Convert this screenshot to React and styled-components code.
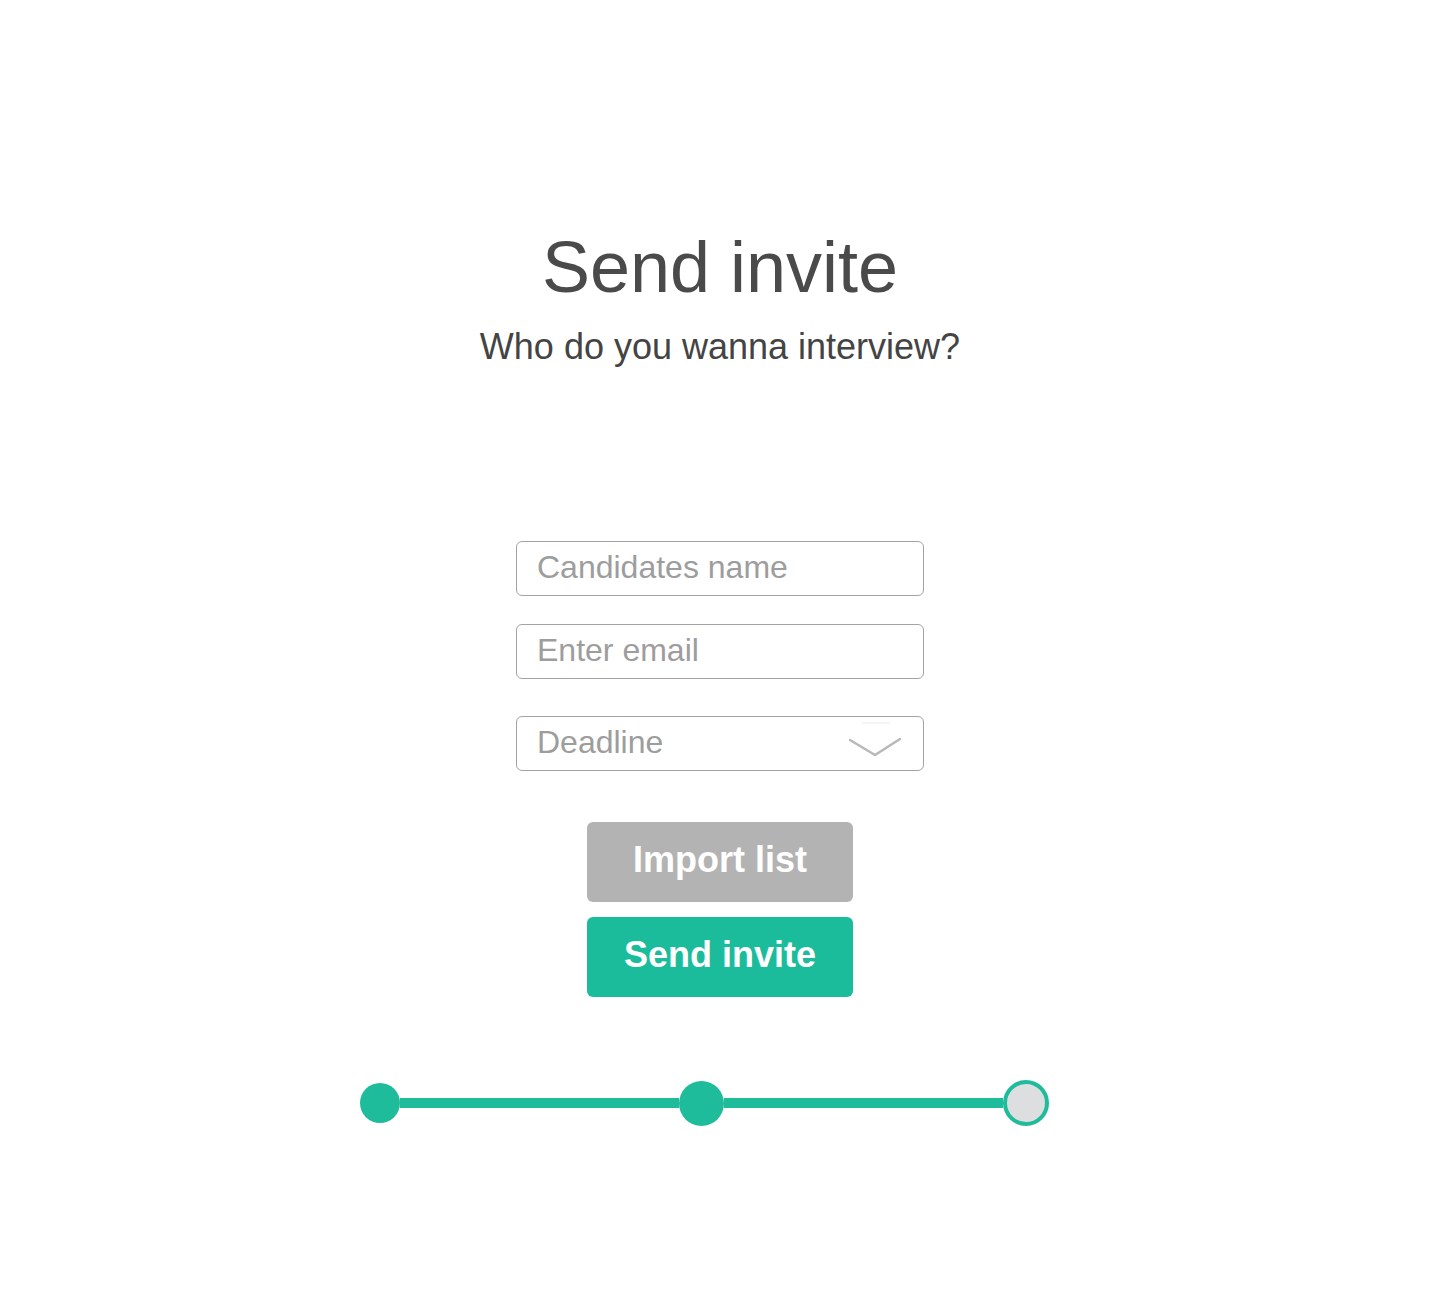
import React from "react";
import styled, { createGlobalStyle } from "styled-components";

const GlobalStyle = createGlobalStyle`
  body {
    margin: 0;
    background: #ffffff;
    font-family: "Liberation Sans", Arial, Helvetica, sans-serif;
  }
`;

const Page = styled.main`
  min-height: 1315px;
  padding-top: 231px;
  box-sizing: border-box;
  display: flex;
  flex-direction: column;
  align-items: center;
`;

const Title = styled.h1`
  margin: 0;
  font-size: 72px;
  line-height: 72px;
  font-weight: 400;
  color: #4a4a4a;
`;

const Subtitle = styled.p`
  margin: 26px 0 0;
  font-size: 36px;
  line-height: 36px;
  color: #444444;
`;

const Form = styled.form`
  margin-top: 176px;
  width: 408px;
  display: flex;
  flex-direction: column;
  align-items: center;
`;

const Input = styled.input`
  display: block;
  width: 100%;
  height: 55px;
  box-sizing: border-box;
  margin-top: ${(props) => props.gap || 0}px;
  padding: 0 20px 3px;
  border: 1px solid #a3a3a3;
  border-radius: 6px;
  outline: none;
  font-family: inherit;
  font-size: 32px;
  color: #4a4a4a;

  &::placeholder {
    color: #9d9d9d;
    opacity: 1;
  }
`;

const Select = styled.div`
  width: 100%;
  height: 55px;
  box-sizing: border-box;
  margin-top: 37px;
  padding: 0 22px 3px 20px;
  border: 1px solid #a3a3a3;
  border-radius: 6px;
  display: flex;
  align-items: center;
  justify-content: space-between;
  font-size: 32px;
  color: #9d9d9d;
  cursor: pointer;

  svg {
    margin-bottom: 4px;
  }
`;

const Button = styled.button`
  display: block;
  width: 266px;
  height: 80px;
  margin-top: ${(props) => props.gap}px;
  padding: 0 0 5px;
  border: none;
  border-radius: 6px;
  background: ${(props) => (props.primary ? "#1bbc9b" : "#b3b3b3")};
  color: #ffffff;
  font-family: inherit;
  font-size: 36px;
  font-weight: 700;
  cursor: pointer;
`;

const Stepper = styled.div`
  margin-top: 83px;
  margin-left: -31px;
  width: 689px;
  display: flex;
  align-items: center;
`;

const Dot = styled.span`
  flex: none;
  width: ${(props) => props.size}px;
  height: ${(props) => props.size}px;
  box-sizing: border-box;
  border-radius: 50%;
  background: ${(props) => (props.pending ? "#dcdedf" : "#1fbc9c")};
  border: ${(props) => (props.pending ? "4px solid #1fbc9c" : "none")};
`;

const Line = styled.span`
  flex: 1;
  height: 10px;
  background: #1fbc9c;
`;

const Chevron = () => (
  <svg width="52" height="36" viewBox="0 0 52 36" fill="none">
    <line x1="13" y1="1" x2="41" y2="1" stroke="#ececec" strokeWidth="1" />
    <polyline
      points="1,18 26,33 51,17"
      stroke="#b8b8b8"
      strokeWidth="2.5"
      strokeLinejoin="round"
      strokeLinecap="round"
    />
  </svg>
);

export default function App() {
  return (
    <>
      <GlobalStyle />
      <Page>
        <Title>Send invite</Title>
        <Subtitle>Who do you wanna interview?</Subtitle>
        <Form onSubmit={(e) => e.preventDefault()}>
          <Input type="text" placeholder="Candidates name" />
          <Input type="email" placeholder="Enter email" gap={28} />
          <Select>
            <span>Deadline</span>
            <Chevron />
          </Select>
          <Button type="button" gap={51}>
            Import list
          </Button>
          <Button type="submit" primary gap={15}>
            Send invite
          </Button>
        </Form>
        <Stepper>
          <Dot size={40} />
          <Line />
          <Dot size={45} />
          <Line />
          <Dot size={46} pending />
        </Stepper>
      </Page>
    </>
  );
}
